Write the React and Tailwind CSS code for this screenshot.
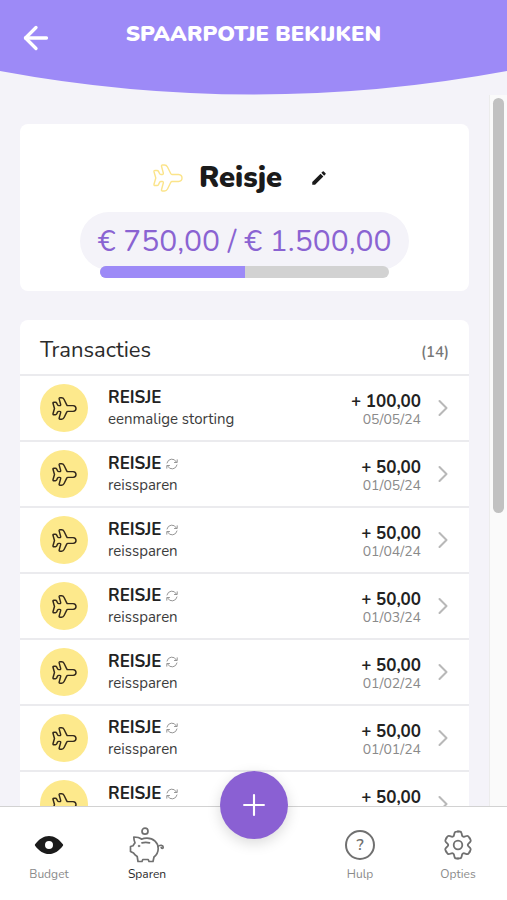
import { ArrowLeft, ChevronRight, Plus } from 'lucide-react';
import { MdEdit } from 'react-icons/md';

const transactions = [
  { label: 'eenmalige storting', amount: '+ 100,00', date: '05/05/24', recurring: false },
  { label: 'reissparen', amount: '+ 50,00', date: '01/05/24', recurring: true },
  { label: 'reissparen', amount: '+ 50,00', date: '01/04/24', recurring: true },
  { label: 'reissparen', amount: '+ 50,00', date: '01/03/24', recurring: true },
  { label: 'reissparen', amount: '+ 50,00', date: '01/02/24', recurring: true },
  { label: 'reissparen', amount: '+ 50,00', date: '01/01/24', recurring: true },
  { label: 'reissparen', amount: '+ 50,00', date: '01/12/23', recurring: true },
];

function PlaneIcon({ className, strokeWidth = 1.4 }) {
  return (
    <svg
      viewBox="0 0 30 28"
      fill="none"
      stroke="currentColor"
      strokeWidth={strokeWidth}
      strokeLinejoin="round"
      strokeLinecap="round"
      className={className}
      aria-hidden="true"
    >
      <path d="M19 10.500H25.500C27.800 10.700 29 12.500 29 14C29 15.500 27.800 17.300 25.500 17.500H19Q18.200 17.500 17.700 18.500L14.500 25Q13.500 27 11.500 27H9.500Q8.200 27 8.500 25.700L10.300 19Q10.600 17.500 9.200 17.500H8Q7 17.500 6.500 18.500L5.500 20.600Q5 21.500 4 21.500H2Q.8 21.500 1 20.300L2.800 14L1 7.700Q.8 6.500 2 6.500H4Q5 6.500 5.500 7.400L6.500 9.500Q7 10.500 8 10.500H9.200Q10.600 10.500 10.300 9L8.500 2.300Q8.200 1 9.500 1H11.500Q13.500 1 14.500 3L17.700 9.500Q18.200 10.500 19 10.500Z" />
    </svg>
  );
}

function RecurringIcon() {
  return (
    <svg
      viewBox="0 0 12 12"
      fill="none"
      stroke="currentColor"
      strokeWidth="0.9"
      strokeLinejoin="round"
      strokeLinecap="round"
      className="size-3 text-[#8a8a8a]"
      aria-hidden="true"
    >
      <path d="M1 5A5 5 0 0 1 10.300 3.800M11.200 1.800V4.500H8.500" />
      <path d="M11 7A5 5 0 0 1 1.700 8.200M.8 10.200V7.500H3.500" />
    </svg>
  );
}

function EyeIcon() {
  return (
    <svg viewBox="0 0 30 20" className="h-5 w-[30px] text-[#1b1b1b]" aria-hidden="true">
      <path
        fill="currentColor"
        fillRule="evenodd"
        d="M15 1c5.300 0 9.800 3 13.900 8.300.4.500.4.900 0 1.400C24.800 16 20.300 19 15 19S5.200 16 1.100 10.700c-.4-.5-.4-.9 0-1.400C5.200 4 9.700 1 15 1zm0 5a4 4 0 1 0 0 8 4 4 0 0 0 0-8z"
      />
    </svg>
  );
}

function PiggyIcon() {
  return (
    <svg
      viewBox="0 0 36 36"
      fill="none"
      stroke="currentColor"
      strokeWidth="1.7"
      strokeLinejoin="round"
      strokeLinecap="round"
      className="size-9 text-[#707070]"
      aria-hidden="true"
    >
      <circle cx="16" cy="4.2" r="3" />
      <path d="M12.500 12.200C10.500 10.500 8 10 4.800 10C4.800 12.500 5.300 14.300 6 15.800C5 16.800 4.500 17.700 4 18.800L1.500 19.500V24.500L4.500 26C5.500 27.500 6.800 28.600 8.200 29.500L9 34.500H13L13.800 32.500H19.200L20 34.500H24L25 30C27.800 27.800 29.200 25 29.200 21.500C29.200 15.500 24.500 11.200 18 11.200C16 11.200 14 11.500 12.500 12.200Z" />
      <path d="M13 15.800C15.500 15.200 18 15.200 20.500 15.800" />
      <path d="M29 19.500C31 17.500 34 18 34.200 20.200C34.200 21.600 32.300 21.800 32.200 20.300" />
      <circle cx="10" cy="19" r="0.900" fill="currentColor" strokeWidth="0.500" />
    </svg>
  );
}

function HelpIcon() {
  return (
    <span className="flex size-[30px] items-center justify-center rounded-full border-2 border-[#707070] text-base leading-none font-semibold text-[#707070]">
      ?
    </span>
  );
}

function GearIcon() {
  return (
    <svg
      viewBox="0 0 30 30"
      fill="none"
      stroke="currentColor"
      strokeWidth="1.8"
      strokeLinejoin="round"
      strokeLinecap="round"
      className="size-[30px] text-[#707070]"
      aria-hidden="true"
    >
      {/* one tooth, repeated around the centre */}
      {[0, 60, 120, 180, 240, 300].map((angle) => (
        <path
          key={angle}
          d="M15 1.500H16.500Q18.200 1.500 18.500 3L19 5.200Q19.500 7.200 21.500 6.600L23.600 6Q25.100 5.600 25.900 7L26.700 8.250"
          transform={`rotate(${angle} 15 15)`}
        />
      ))}
      <circle cx="15" cy="15" r="4.300" />
    </svg>
  );
}

function NavItem({ icon, label, active }) {
  return (
    <a
      href="#"
      className={`flex flex-col items-center gap-[3px] text-xs leading-4 ${active ? 'text-[#2b2b2b]' : 'text-[#8a8a8a]'}`}
    >
      <span className="flex h-9 items-center justify-center">{icon}</span>
      {label}
    </a>
  );
}

function TransactionRow({ label, amount, date, recurring }) {
  return (
    <li className="border-t-2 border-[#ebebee]">
      <a href="#" className="flex h-16 items-center px-5">
        <span className="flex size-12 shrink-0 items-center justify-center rounded-full bg-[#fde98c] text-[#33291c]">
          <PlaneIcon className="h-[23px] w-[25px]" strokeWidth={1.8} />
        </span>
        <span className="ml-5 flex flex-1 flex-col">
          <span className="flex items-center gap-[5px] text-[17px] leading-[22px] font-bold text-[#222]">
            REISJE
            {recurring && <RecurringIcon />}
          </span>
          <span className="text-[15px] leading-5 text-[#3c3c3c]">{label}</span>
        </span>
        <span className="flex flex-col items-end pt-1">
          <span className="text-[17px] leading-5 font-bold text-[#222]">{amount}</span>
          <span className="text-sm leading-4 text-[#8a8a8a]">{date}</span>
        </span>
        <ChevronRight size={28} strokeWidth={1.75} className="-mr-2 ml-2 text-[#b8b8b8]" />
      </a>
    </li>
  );
}

export default function App() {
  return (
    <div className="flex h-screen flex-col bg-[#f4f3f9] font-['Nunito','Lato',sans-serif] text-[#222]">
      <header className="relative h-[95px] shrink-0">
        <svg viewBox="0 0 507 95" preserveAspectRatio="none" className="absolute inset-0 h-full w-full" aria-hidden="true">
          <path d="M0 0H507V71Q253.500 118 0 71Z" fill="#9d8af7" />
        </svg>
        <div className="relative grid grid-cols-[72px_1fr_72px] text-white">
          <button type="button" aria-label="Terug" className="flex justify-center pt-5">
            <ArrowLeft size={36} strokeWidth={2.2} />
          </button>
          <h1 className="pt-5 text-center text-[22px] leading-7 font-black">SPAARPOTJE BEKIJKEN</h1>
        </div>
      </header>

      <div className="flex min-h-0 flex-1">
        <main className="flex-1 overflow-y-auto px-5 pt-[29px] [scrollbar-width:none]">
          <section className="flex flex-col items-center rounded-lg bg-white pt-8 pb-[13px]">
            <div className="flex h-11 items-center">
              <PlaneIcon className="h-7 w-[30px] text-[#fbe48a]" />
              <h2 className="ml-4 text-[29px] leading-10 font-black text-[#1b1b1b]">Reisje</h2>
              <button type="button" aria-label="Bewerken" className="mr-2 ml-7 text-[#1b1b1b]">
                <MdEdit size={18} />
              </button>
            </div>
            <div className="mt-3 flex h-[58px] items-center rounded-full bg-[#f4f3f9] px-[18px] text-[30px] text-[#8a63d2]">
              € 750,00 / € 1.500,00
            </div>
            <div className="-mt-1 h-3 w-[289px] overflow-hidden rounded-full bg-[#d2d2d2]">
              <div className="h-full bg-[#9d8af7]" style={{ width: `${(750 / 1500) * 100}%` }} />
            </div>
          </section>

          <section className="mt-[29px] rounded-t-lg bg-white">
            <div className="flex h-[54px] items-center justify-between px-5 pt-1.5">
              <h2 className="text-[22px] leading-7 text-[#2b2b2b]">Transacties</h2>
              <span className="pt-1 text-[15px] font-semibold text-[#777]">(14)</span>
            </div>
            <ul>
              {transactions.map((t) => (
                <TransactionRow key={t.date} {...t} />
              ))}
            </ul>
          </section>
        </main>
        <div className="w-[18px] shrink-0 border-l border-[#ececec] bg-[#fafafa] px-[3px] pt-[3px]" aria-hidden="true">
          <div className="h-[415px] rounded-full bg-[#c1c1c1]" />
        </div>
      </div>

      <nav className="relative grid h-[94px] shrink-0 grid-cols-[98px_98px_1fr_98px_98px] border-t border-[#d2d2d2] bg-white pt-5">
        <NavItem icon={<EyeIcon />} label="Budget" />
        <NavItem icon={<PiggyIcon />} label="Sparen" active />
        <button
          type="button"
          aria-label="Toevoegen"
          className="absolute -top-9 left-1/2 flex size-[68px] -translate-x-1/2 items-center justify-center rounded-full bg-[#8a60d3] text-white shadow-[0_4px_14px_rgba(0,0,0,0.15)]"
        >
          <Plus size={34} strokeWidth={1.5} />
        </button>
        <span />
        <NavItem icon={<HelpIcon />} label="Hulp" />
        <NavItem icon={<GearIcon />} label="Opties" />
      </nav>
    </div>
  );
}
